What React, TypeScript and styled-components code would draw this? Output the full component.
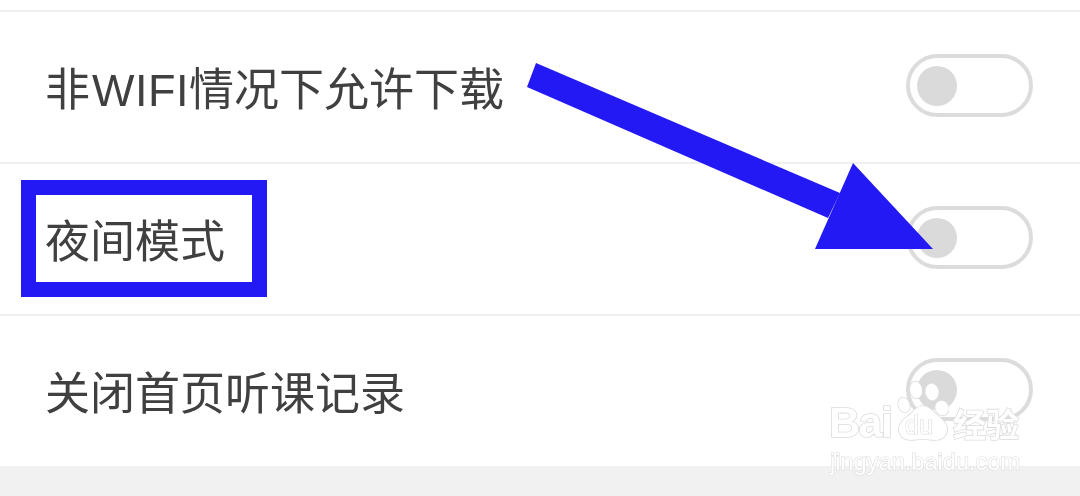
import React from "react";
import styled, { createGlobalStyle } from "styled-components";

const Global = createGlobalStyle`
  html, body { margin: 0; padding: 0; background: #fff; }
`;

const Page = styled.div`
  position: relative;
  width: 1080px;
  height: 496px;
  overflow: hidden;
  background: #fff;
  display: flex;
  flex-direction: column;
  padding-top: 10px;
  box-sizing: border-box;
  font-family: "Liberation Sans", "Noto Sans CJK SC", sans-serif;
`;

const Row = styled.div`
  height: 152px;
  box-sizing: border-box;
  border-top: 2px solid #f0f0f0;
  padding: 0 47px 0 45px;
  display: flex;
  align-items: center;
  justify-content: space-between;
`;

const Label = styled.span`
  font-size: 45px;
  line-height: 60px;
  color: #404040;
  margin-top: 8px;
  filter: blur(0.3px);
`;

const Latin = styled.span`
  margin-left: 2px;
  letter-spacing: 0.5px;
`;

const Toggle = styled.div`
  width: 127px;
  height: 63px;
  box-sizing: border-box;
  border: 4px solid #dcdcdc;
  border-radius: 32px;
  background: #fff;
  display: flex;
  align-items: center;
  padding-left: 7px;
  margin-bottom: 3px;
  filter: blur(0.5px);
`;

const Knob = styled.div`
  width: 40px;
  height: 40px;
  border-radius: 50%;
  background: #dadada;
`;

const Footer = styled.div`
  flex: 1;
  background: #f1f1f1;
`;

const HighlightBox = styled.div`
  position: absolute;
  left: 21px;
  top: 180px;
  width: 246px;
  height: 117px;
  box-sizing: border-box;
  border: 15px solid #2319f5;
`;

const ArrowLayer = styled.svg`
  position: absolute;
  left: 0;
  top: 0;
`;

const Watermark = styled.div`
  position: absolute;
  left: 829px;
  top: 380px;
  width: 200px;
  height: 96px;
  display: flex;
  flex-direction: column;
  font-family: "Liberation Sans", "Noto Sans CJK SC", sans-serif;
  color: #fff;
  -webkit-text-stroke: 1.6px #dcdcdc;
  paint-order: stroke fill;
  filter: blur(0.5px);
`;

const WatermarkTop = styled.div`
  display: flex;
  align-items: flex-end;
  height: 62px;
  font-size: 43px;
  font-weight: 700;
  line-height: 40px;
`;

const BaiText = styled.span`
  letter-spacing: -1.5px;
  width: 68px;
`;

const PawBlock = styled.div`
  position: relative;
  flex: none;
  width: 52px;
  height: 62px;
`;

const DuText = styled.span`
  position: absolute;
  left: 8px;
  top: 31px;
  font-size: 25px;
  line-height: 28px;
  font-weight: 400;
  -webkit-text-stroke: 1.2px #dcdcdc;
`;

const WatermarkCn = styled.span`
  font-family: "Noto Sans CJK SC", sans-serif;
  font-size: 33px;
  line-height: 38px;
  font-weight: 700;
  margin-left: 4px;
`;

const WatermarkUrl = styled.div`
  font-size: 23.6px;
  line-height: 30px;
  margin-top: 5px;
  margin-left: 1px;
  white-space: nowrap;
  -webkit-text-stroke: 1.2px #dcdcdc;
`;

const items = [
  <>
    非<Latin>WIFI</Latin>情况下允许下载
  </>,
  "夜间模式",
  "关闭首页听课记录",
];

export default function App() {
  return (
    <Page>
      <Global />
      {items.map((t, i) => (
        <Row key={i}>
          <Label>{t}</Label>
          <Toggle>
            <Knob />
          </Toggle>
        </Row>
      ))}
      <Footer />
      <HighlightBox />
      <ArrowLayer width="1080" height="496" viewBox="0 0 1080 496">
        <polygon points="536,63 840,193 828,218 527,87" fill="#2319f5" />
        <polygon points="853,163 933,249 815,249" fill="#2319f5" />
      </ArrowLayer>
      <Watermark>
        <WatermarkTop>
          <BaiText>Bai</BaiText>
          <PawBlock>
            <svg width="52" height="62" viewBox="0 0 52 62">
              <g fill="#fff" stroke="#dcdcdc" strokeWidth="1.6">
                <ellipse cx="7" cy="25" rx="5.5" ry="7.5" transform="rotate(-20 7 25)" />
                <ellipse cx="19" cy="10" rx="6" ry="8.5" transform="rotate(-8 19 10)" />
                <ellipse cx="35" cy="12" rx="6.5" ry="8.5" transform="rotate(-10 35 12)" />
                <ellipse cx="45" cy="28" rx="6.5" ry="7.5" transform="rotate(-25 45 28)" />
                <path d="M26 26c6 0 9 5 14 9 6 5 11 9 10 16-1 6-6 9-12 9-4 0-8-1-12-1s-8 1-12 1c-7 0-11-4-12-9-1-7 4-11 9-15 6-4 8-10 15-10z" />
              </g>
            </svg>
            <DuText>du</DuText>
          </PawBlock>
          <WatermarkCn>经验</WatermarkCn>
        </WatermarkTop>
        <WatermarkUrl>jingyan.baidu.com</WatermarkUrl>
      </Watermark>
    </Page>
  );
}
